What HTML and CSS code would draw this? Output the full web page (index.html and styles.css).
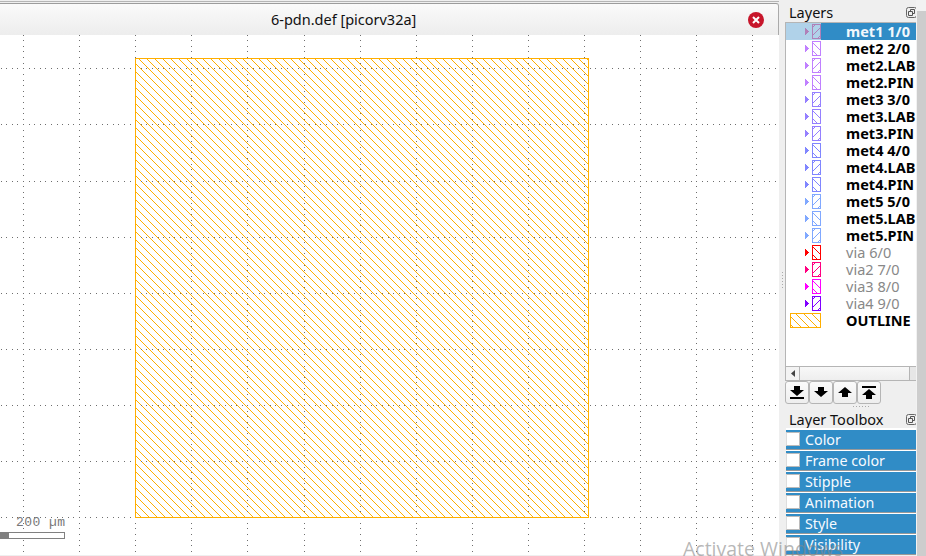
FILE: index.html
```html
<!DOCTYPE html>
<html lang="en">
<head>
<meta charset="utf-8">
<title>6-pdn.def [picorv32a]</title>
<link rel="stylesheet" href="styles.css">
</head>
<body>
<div class="window">
  <main class="view">
    <header class="tab"><span class="tab-title">6-pdn.def [picorv32a]</span>
      <svg class="close" width="16" height="16" viewBox="0 0 16 16"><circle cx="8" cy="8" r="8" fill="#c7162b"/><path d="M5 5l6 6M11 5l-6 6" stroke="#fff" stroke-width="2"/></svg>
    </header>
    <svg class="layout" id="layout" width="779" height="520" viewBox="0 35 779 520" shape-rendering="crispEdges"></svg>
  </main>
  <div class="splitter"><i></i><i></i><i></i><i></i><i></i><i></i></div>
  <aside class="dock">
    <h2 class="dock-title"><span>Layers</span><svg class="float" width="11" height="11" viewBox="0 0 11 11"><rect x=".5" y=".5" width="10" height="10" rx="2" fill="none" stroke="#666"/><path d="M4.5 4.5v-2h4v4h-2M2.500 4.500h4v4h-4z" fill="none" stroke="#555"/></svg></h2>
    <ul class="layers" id="layers"></ul>
    <div class="scroll"><span class="scroll-arrow"><svg width="4" height="7" viewBox="0 0 4 7"><path d="M4 0v7L0 3.500z" fill="#444"/></svg></span><span class="scroll-thumb"></span><span class="scroll-end"></span></div>
    <div class="buttons">
      <button><svg width="14" height="13" viewBox="0 0 14 13"><path d="M4 0h6v4h4L7 10 0 4h4zM0 11h14v2H0z"/></svg></button>
      <button><svg width="14" height="13" viewBox="0 0 14 13"><path d="M4 1h6v4h4L7 11 0 5h4z"/></svg></button>
      <button><svg width="14" height="13" viewBox="0 0 14 13"><path d="M7 1l7 6h-4v4H4V7H0z"/></svg></button>
      <button><svg width="14" height="13" viewBox="0 0 14 13"><path d="M0 0h14v2H0zM7 3l7 6h-4v4H4V9H0z"/></svg></button>
    </div>
    <div class="grip"><i></i><i></i><i></i><i></i><i></i><i></i></div>
    <h2 class="dock-title toolbox-title"><span>Layer Toolbox</span><svg class="float" width="11" height="11" viewBox="0 0 11 11"><rect x=".5" y=".5" width="10" height="10" rx="2" fill="none" stroke="#666"/><path d="M4.500 4.500v-2h4v4h-2M2.500 4.500h4v4h-4z" fill="none" stroke="#555"/></svg></h2>
    <div class="tools">
      <label class="tool"><i class="box"></i><span>Color</span></label>
      <label class="tool"><i class="box"></i><span>Frame color</span></label>
      <label class="tool"><i class="box"></i><span>Stipple</span></label>
      <label class="tool"><i class="box"></i><span>Animation</span></label>
      <label class="tool"><i class="box"></i><span>Style</span></label>
      <label class="tool"><i class="box"></i><span>Visibility</span></label>
    </div>
  </aside>
  <div class="edge"></div>
</div>
<div class="watermark">Activate Windows</div>
<script src="script.js"></script>
</body>
</html>
```
FILE: styles.css
```css
* { box-sizing: border-box; }
body { margin: 0; width: 926px; height: 556px; overflow: hidden; background: #efefef; font: 14px/17px "Noto Sans", "Open Sans", sans-serif; color: #111; position: relative; }
svg { display: block; flex: none; }
.window { display: flex; height: 556px; }
.view { width: 779px; padding-top: 3px; background: linear-gradient(#efefef 0 1px, #b5b5b5 1px 2px, #efefef 2px); }
.tab { height: 32px; border-top: 1px solid #9c9c9c; border-right: 1px solid #aaa; border-top-right-radius: 3px; background: linear-gradient(#fafafa, #ededed); display: flex; align-items: center; padding: 0 14px 0 271px; justify-content: space-between; }
.tab-title { font-size: 14.5px; letter-spacing: -.01px; white-space: nowrap; }
.layout { background: #fff; }
.scale-label { font: 13px "Liberation Mono", monospace; fill: #777; }
.splitter { width: 6px; display: flex; flex-direction: column; align-items: center; padding-top: 272px; gap: 2px; }
.splitter i, .grip i { width: 1px; height: 1px; background: #aaa; }
.dock { width: 131px; padding-left: 1px; overflow: hidden; display: flex; flex-direction: column; border-top: 1px solid #efefef; }
.dock-title { margin: 0; height: 21px; padding: 2px 0 0 3px; display: flex; justify-content: space-between; font-size: 14.5px; font-weight: 400; line-height: 18px; white-space: nowrap; }
.float { margin: 4px -1px 0 0; }
.layers { list-style: none; margin: 0 0 0 -1px; padding: 0; height: 344px; border-left: 1px solid #b5b5b5; border-top: 1px solid #b5b5b5; background: #fff; }
.layer { height: 17px; display: flex; align-items: center; white-space: nowrap; font-weight: 700; font-size: 14.5px; color: #000; }
.layer svg { margin-right: 25px; }
.layer span { letter-spacing: .03px; }
.selected { background: linear-gradient(90deg, #b0d2e9 35px, #308cc6 35px); color: #f2f8fc; }
.hidden { color: #888; font-weight: 400; }
.scroll { height: 15px; margin-left: -1px; display: flex; border: 1px solid #b5b5b5; border-right: 0; background: #f3f3f3; }
.scroll-arrow { width: 14px; border-right: 1px solid #b5b5b5; display: flex; align-items: center; justify-content: center; }
.scroll-thumb { flex: 1; background: linear-gradient(#f8f8f8, #eee); }
.scroll-end { width: 7px; border-left: 1px solid #b5b5b5; background: #e6e6e6; }
.buttons { display: flex; margin-left: -1px; height: 23px; }
.buttons button { width: 24px; height: 23px; padding: 0; display: flex; align-items: center; justify-content: center; border: 1px solid #b5b5b5; border-radius: 3px; background: linear-gradient(#fbfbfb, #eee); }
.grip { height: 5px; display: flex; gap: 2px; align-items: flex-end; padding: 0 0 2px 67px; }
.toolbox-title { height: 19px; padding-top: 1px; }
.tools { display: flex; flex-direction: column; border-top: 1px solid #fff; }
.tool { height: 21px; flex: none; display: flex; align-items: center; gap: 5px; background: #308cc6; color: #f5faff; border-bottom: 1px solid #999; border-top: 1px solid #fff; white-space: nowrap; font-size: 14.3px; }
.box { width: 14px; height: 14px; margin-top: -1px; background: #fff; border: 1px solid #bbb; border-left-color: #ddd; }
.edge { width: 10px; border-left: 1px solid #f2f2f2; background: linear-gradient(#f2f2f2 11px, #cdcdcd 11px); }
.watermark { position: absolute; left: 683px; top: 537px; font: 19.5px/24px "Open Sans", sans-serif; color: rgba(135,135,135,.6); white-space: nowrap; }
```
FILE: script.js
```js
// Grid and cell outline
const step = 56.1, minor = step / 10;
let out = '<defs><pattern id="hatch" width="8" height="8" patternUnits="userSpaceOnUse">';
for (let i = 0; i < 8; i++) out += `<rect x="${i}" y="${i}" width="1" height="1" fill="#ffae00"/>`;
out += '</pattern></defs><rect x="135" y="58" width="454" height="460" fill="url(#hatch)"/>';
const dot = (x, y) => `<rect x="${Math.round(x)}" y="${Math.round(y)}" width="1" height="1"/>`;
out += '<g fill="#6e6e6e">';
for (let i = 0; i < 14; i++)
  for (let k = -6; k <= 86; k++) out += dot(23 + i * step, 68.3 + k * minor);
for (let j = 0; j < 9; j++)
  for (let k = -4; k <= 134; k++) out += dot(23 + k * minor, 68.3 + j * step);
out += '</g><rect x="135.5" y="58.5" width="453" height="459" fill="none" stroke="#ffae00"/>';
out += '<text class="scale-label" x="16" y="526" textLength="49">200 µm</text>';
out += '<rect x="-1.500" y="532.5" width="66" height="6" fill="#fff" stroke="#808080"/><rect x="0" y="532" width="9" height="7" fill="#808080"/>';
document.getElementById('layout').innerHTML = out;

// Layer list: name, colour, visible
const layers = [
  ['met1 1/0', '#b080b8', 1], ['met2 2/0', '#c080ff', 1], ['met2.LAB', '#c080ff', 1], ['met2.PIN', '#c080ff', 1],
  ['met3 3/0', '#9580ff', 1], ['met3.LAB', '#9580ff', 1], ['met3.PIN', '#9580ff', 1],
  ['met4 4/0', '#8086ff', 1], ['met4.LAB', '#8086ff', 1], ['met4.PIN', '#8086ff', 1],
  ['met5 5/0', '#80a8ff', 1], ['met5.LAB', '#80a8ff', 1], ['met5.PIN', '#80a8ff', 1],
  ['via 6/0', '#ff0000', 0], ['via2 7/0', '#ff0080', 0], ['via3 8/0', '#ff00ff', 0], ['via4 9/0', '#8000ff', 0],
  ['OUTLINE', '#ffae00', 1]
];
const rect = (x, y, w, h, c) => `<rect x="${x}" y="${y}" width="${w}" height="${h}" fill="${c}"/>`;
document.getElementById('layers').innerHTML = layers.map(([name, c, visible], i) => {
  const wide = name === 'OUTLINE', x0 = wide ? 4 : 26, w = 35 - x0;
  let px = rect(x0, 1, w, 1, c) + rect(x0, 15, w, 1, c) + rect(x0, 1, 1, 15, c) + rect(34, 1, 1, 15, c);
  for (let y = 2; y < 15; y++)
    for (let x = x0 + 1; x < 34; x++)
      if ((i % 2 ? (x - y) : (x + y + 2)) % 8 === 0) px += rect(x, y, 1, 1, c);
  if (!wide) px += `<path fill="${c}" d="M19 5h1v1h1v1h1v1h1v1h-1v1h-1v1h-1v1h-1z"/>`;
  return `<li class="layer${i ? '' : ' selected'}${visible ? '' : ' hidden'}"><svg width="35" height="17" shape-rendering="crispEdges">${px}</svg><span>${name}</span></li>`;
}).join('');
```
